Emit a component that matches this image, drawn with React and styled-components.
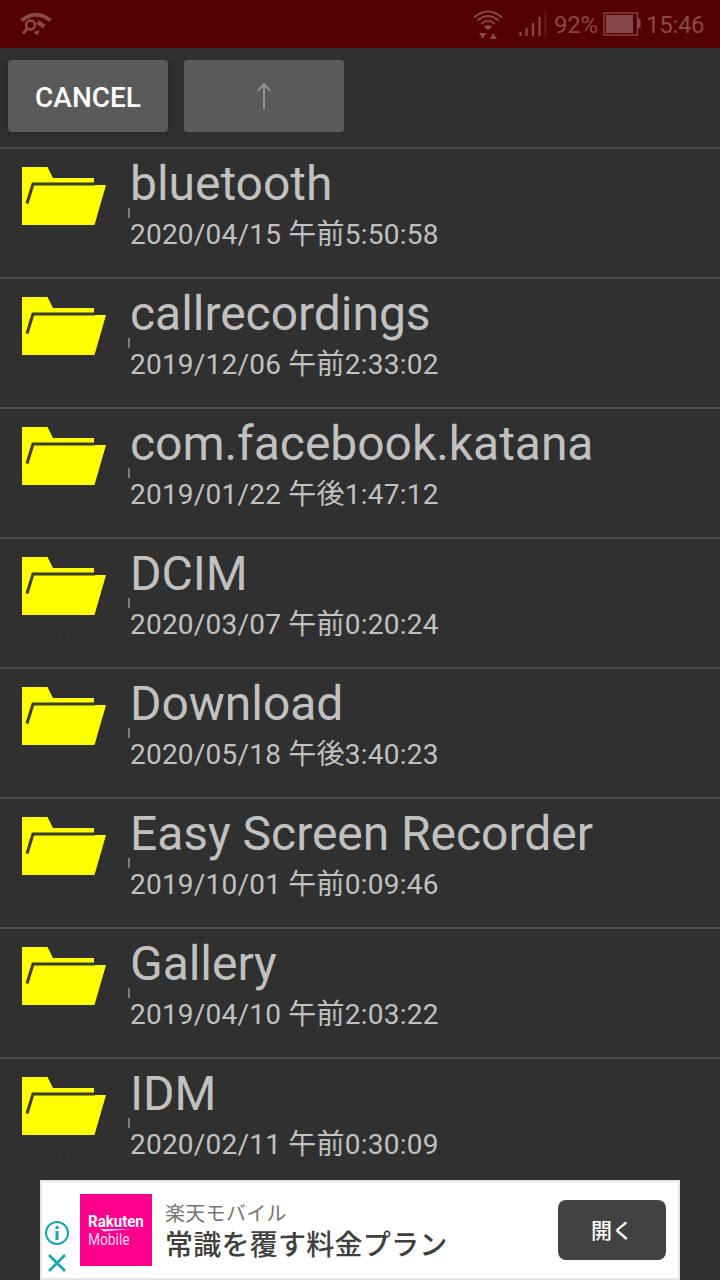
import React from 'react'
import styled, { createGlobalStyle } from 'styled-components'

const GlobalStyle = createGlobalStyle`
    * {
        box-sizing: border-box;
    }
    body {
        margin: 0;
        background: #303030;
        font-family: Roboto, "Noto Sans CJK JP", sans-serif;
    }
`

const Screen = styled.div`
    display: flex;
    flex-direction: column;
    width: 720px;
    height: 1280px;
    overflow: hidden;
    background: #303030;
`

const StatusBar = styled.header`
    display: flex;
    flex: none;
    align-items: center;
    height: 48px;
    padding: 0 11px 0 20px;
    background: #540000;
    color: #874848;
    font-size: 24px;
    line-height: 48px;
    white-space: nowrap;

    svg {
        display: block;
        flex: none;
    }
`

const StatusSpacer = styled.div`
    flex: 1;
`

const StatusText = styled.span`
    width: ${({ width }) => width}px;
    margin-left: ${({ indent }) => indent || 0}px;
    padding-top: 2px;
    letter-spacing: -.3px;
`

const Toolbar = styled.div`
    display: flex;
    flex: none;
    gap: 16px;
    height: 99px;
    padding: 12px 8px 0;
`

const ToolButton = styled.button`
    display: flex;
    align-items: center;
    justify-content: center;
    width: 160px;
    height: 72px;
    padding: 2px 0 0;
    border: 0;
    border-radius: 4px;
    background: #5a5a5b;
    box-shadow: ${({ disabled }) => disabled ? 'none' : '0 1px 4px rgba(0, 0, 0, .3)'};
    color: #fff;
    font: 500 28px Roboto, sans-serif;
`

const List = styled.ul`
    flex: 1;
    min-height: 0;
    margin: 0;
    padding: 0;
    overflow: hidden;
    list-style: none;
`

const Row = styled.li`
    display: flex;
    height: 130px;
    padding-left: 20px;
    border-top: 2px solid #4b4b4b;
`

const FolderSvg = styled.svg`
    display: block;
    flex: none;
    width: 108px;
    height: 92px;
    margin-top: 11px;
`

const Info = styled.div`
    display: flex;
    flex-direction: column;
    padding-top: 7px;
    color: #c1c1c1;
    white-space: nowrap;
`

const Name = styled.div`
    height: 52px;
    padding-left: 2px;
    font-size: 48px;
    line-height: 56px;
    letter-spacing: -.04px;
`

const Tick = styled.div`
    width: 2px;
    height: 10px;
    background: #7d7d7d;
`

const Stamp = styled.div`
    height: 34px;
    padding-left: 2px;
    font-size: 28px;
    line-height: 34px;
    letter-spacing: .22px;
`

const Ad = styled.footer`
    display: flex;
    flex: none;
    width: 640px;
    height: 100px;
    margin: 0 auto;
    border: 2px solid #e6e6e6;
    background: #fff;
`

const AdMarks = styled.svg`
    flex: none;
    width: 38px;
    height: 96px;
`

const AdLogo = styled.div`
    flex: none;
    width: 72px;
    height: 72px;
    margin-top: 12px;
    padding: 18px 0 0 8px;
    background: #ff008c;
    color: #fff;
`

const Brand = styled.div`
    height: 17px;
    font: 700 16px/19px Roboto, sans-serif;
    transform: scaleX(.94);
    transform-origin: left;
`

const BrandLine = styled.svg`
    display: block;
    width: 56px;
    height: 3px;
`

const BrandSub = styled.div`
    height: 17px;
    color: #ffd6ee;
    font: 400 16px/16px Roboto, sans-serif;
    transform: scaleX(.86);
    transform-origin: left;
`

const AdCopy = styled.div`
    flex: 1;
    padding: 17px 0 0 13px;
    font-family: Roboto, "Noto Sans CJK JP", sans-serif;
    white-space: nowrap;
`

const AdTitle = styled.div`
    height: 30px;
    color: #757575;
    font-size: 20px;
    line-height: 30px;
    letter-spacing: .3px;
`

const AdText = styled.div`
    height: 34px;
    color: #3f3f3f;
    font-size: 28px;
    font-weight: 500;
    line-height: 34px;
    letter-spacing: .25px;
`

const AdButton = styled.button`
    width: 108px;
    height: 60px;
    margin: 18px 12px 0 0;
    padding: 0 0 3px;
    border: 0;
    border-radius: 8px;
    background: #424242;
    color: #fff;
    font: 500 21px "Noto Sans CJK JP", sans-serif;
`

const folders = [
    { name: 'bluetooth', date: '2020/04/15 午前5:50:58' },
    { name: 'callrecordings', date: '2019/12/06 午前2:33:02' },
    { name: 'com.facebook.katana', date: '2019/01/22 午後1:47:12' },
    { name: 'DCIM', date: '2020/03/07 午前0:20:24' },
    { name: 'Download', date: '2020/05/18 午後3:40:23' },
    { name: 'Easy Screen Recorder', date: '2019/10/01 午前0:09:46' },
    { name: 'Gallery', date: '2019/04/10 午前2:03:22' },
    { name: 'IDM', date: '2020/02/11 午前0:30:09' },
]

const WifiSearchIcon = () => (
    <svg width="32" height="48" viewBox="20 0 32 48" fill="none" stroke="currentColor">
        <path d="M21.5 20.5Q36 9 50.5 20.5" strokeWidth="4" />
        <circle cx="30.5" cy="25" r="4.5" strokeWidth="2.6" />
        <path d="M27.3 28.5L23 33.5" strokeWidth="3" />
        <path d="M37.5 22.2L44.5 26.5" strokeWidth="4.5" />
        <path d="M34 32.5L39 30.5L37.5 34.5Z" fill="currentColor" strokeWidth="1" />
    </svg>
)

const WifiIcon = () => (
    <svg width="82" height="48" viewBox="472 0 82 48" fill="none" stroke="currentColor" strokeWidth="1.7">
        <path d="M474 17.5Q488 5.5 502 17.5M477.5 20.5Q488 11.5 498.5 20.5M481 24Q488 17.5 495 24" />
        <path d="M484 26.5Q488 23.5 492 26.5L488 30.5Z" fill="currentColor" stroke="none" />
        <path d="M479 33H486.5L482.7 39ZM489.5 39H497L493.3 33Z" fill="currentColor" stroke="none" />
        <path d="M520.5 32V36M526.5 28V36M533 23V36M539.5 17V36" strokeWidth="2.2" />
        <path d="M545.5 12V36" strokeWidth="2" opacity=".35" />
    </svg>
)

const BatteryIcon = () => (
    <svg width="38" height="48" viewBox="603 0 38 48">
        <rect x="604" y="13" width="33.5" height="22" fill="none" stroke="currentColor" strokeWidth="1.4" />
        <rect x="606" y="15" width="27" height="18" fill="currentColor" />
        <path d="M637.5 19H640.5V28H637.5Z" fill="currentColor" />
    </svg>
)

const UpArrow = () => (
    <svg width="16" height="30" viewBox="0 0 16 30" fill="none" stroke="#929292" strokeWidth="2">
        <path d="M8 27V2.5M1.5 9L8 2.5L14.5 9" />
    </svg>
)

const FolderIcon = () => (
    <FolderSvg viewBox="20 160 108 92">
        <path d="M22 167H47.5L53 178H94V184H41.5L36 203L22 214Z" fill="#ff0" />
        <path d="M22 200L36 185H106L94.5 225H22Z" fill="#ff0" />
        <path d="M27 203.5L33 184H95" fill="none" stroke="#3d3d18" strokeWidth="3" />
        <circle cx="64" cy="245.5" r="2" fill="#2b2b2b" />
    </FolderSvg>
)

function FolderRow ({ name, date }) {
    return (
        <Row>
            <FolderIcon />
            <Info>
                <Name>{ name }</Name>
                <Tick />
                <Stamp>{ date }</Stamp>
            </Info>
        </Row>
    )
}

function App () {
    return (
        <Screen>
            <GlobalStyle />
            <StatusBar>
                <WifiSearchIcon />
                <StatusSpacer />
                <WifiIcon />
                <StatusText width={49}>92%</StatusText>
                <BatteryIcon />
                <StatusText width={63} indent={5}>15:46</StatusText>
            </StatusBar>
            <Toolbar>
                <ToolButton>CANCEL</ToolButton>
                <ToolButton disabled aria-label="Up"><UpArrow /></ToolButton>
            </Toolbar>
            <List>
                { folders.map(folder => <FolderRow key={folder.name} {...folder} />) }
            </List>
            <Ad>
                <AdMarks viewBox="0 0 38 96" fill="none" stroke="#18a5b0">
                    <circle cx="15" cy="51" r="11" strokeWidth="2" />
                    <path d="M15 49V58M15 44V47" strokeWidth="3" />
                    <path d="M7 73L23 89M23 73L7 89" strokeWidth="2.6" />
                </AdMarks>
                <AdLogo>
                    <Brand>Rakuten</Brand>
                    <BrandLine viewBox="0 0 56 3">
                        <path d="M12 0H42L16 2.5Z" fill="#ffc4e6" />
                    </BrandLine>
                    <BrandSub>Mobile</BrandSub>
                </AdLogo>
                <AdCopy>
                    <AdTitle>楽天モバイル</AdTitle>
                    <AdText>常識を覆す料金プラン</AdText>
                </AdCopy>
                <AdButton>開く</AdButton>
            </Ad>
        </Screen>
    )
}

export default App
